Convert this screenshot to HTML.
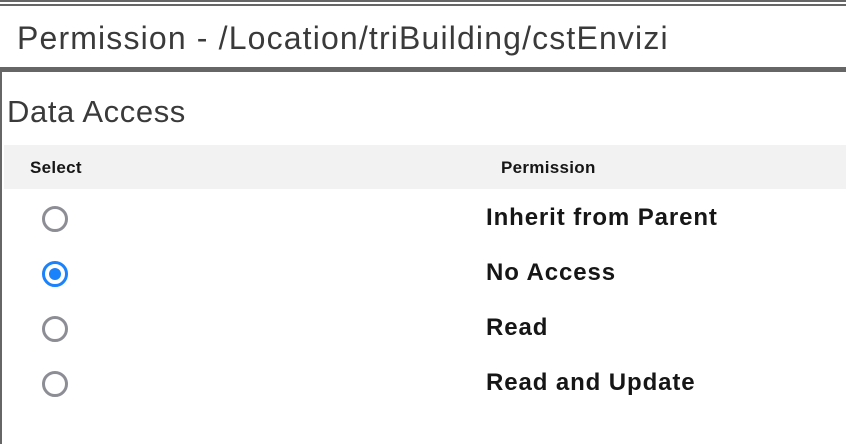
<!DOCTYPE html>
<html><head><meta charset="utf-8"><style>
body{margin:0;width:846px;height:444px;background:#fff;font-family:"Liberation Sans",sans-serif;position:relative;overflow:hidden;color:#161616}
.a{position:absolute;white-space:nowrap}
.r{position:absolute;left:42px;width:20px;height:20px;border:3px solid #8d8d95;border-radius:50%}
.l{position:absolute;left:486px;font-size:24px;font-weight:bold;color:#161616;letter-spacing:0.9px;white-space:nowrap}
</style></head><body>
<div class="a" style="left:0;top:0;width:846px;height:2px;background:#666"></div>
<div class="a" style="left:0;top:4px;width:846px;height:2px;background:#666"></div>
<div class="a" style="left:17px;top:20px;font-size:32px;letter-spacing:1.15px;color:#3a3a3a">Permission - /Location/triBuilding/cstEnvizi</div>
<div class="a" style="left:0;top:67px;width:846px;height:5px;background:#666"></div>
<div class="a" style="left:0;top:72px;width:2px;height:372px;background:#666"></div>
<div class="a" style="left:7px;top:94px;font-size:31px;letter-spacing:0.6px;color:#3a3a3a">Data Access</div>
<div class="a" style="left:4px;top:145px;width:842px;height:44px;background:#f2f2f2"></div>
<div class="a" style="left:30px;top:158px;font-size:17px;font-weight:bold;letter-spacing:0.3px">Select</div>
<div class="a" style="left:501px;top:158px;font-size:17px;font-weight:bold;letter-spacing:0.3px">Permission</div>
<div class="r" style="top:206px"></div>
<div class="r" style="top:261px;border-color:#1a82fb"><div style="position:absolute;left:4px;top:4px;width:12px;height:12px;border-radius:50%;background:#1a82fb"></div></div>
<div class="r" style="top:316px"></div>
<div class="r" style="top:371px"></div>
<div class="l" style="top:204px">Inherit from Parent</div>
<div class="l" style="top:259px">No Access</div>
<div class="l" style="top:314px">Read</div>
<div class="l" style="top:369px">Read and Update</div>
</body></html>
